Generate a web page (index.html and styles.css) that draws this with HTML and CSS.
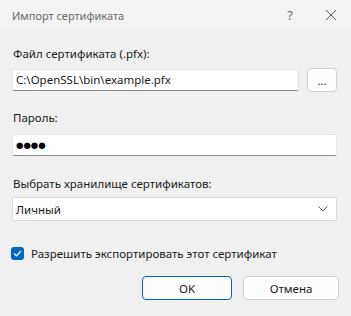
FILE: index.html
```html
<!DOCTYPE html>
<html lang="ru">
<head>
    <meta charset="UTF-8">
    <title>Импорт сертификата</title>
    <link rel="stylesheet" href="styles.css">
</head>
<body>
    <div class="dialog">
        <div class="titlebar">
            <span class="title">Импорт сертификата</span>
            <span class="help">?</span>
            <span class="close">
                <svg width="12" height="12" viewBox="0 0 12 12"><path d="M1 1 L11 11 M11 1 L1 11" stroke="#5a5a5a" stroke-width="1"/></svg>
            </span>
        </div>

        <div class="content">
            <label class="label">Файл сертификата (.pfx):</label>
            <div class="file-row">
                <div class="textbox file-box">C:\OpenSSL\bin\example.pfx</div>
                <button class="btn browse">...</button>
            </div>

            <label class="label pass-label">Пароль:</label>
            <div class="textbox pass-box">●●●●</div>

            <label class="label store-label">Выбрать хранилище сертификатов:</label>
            <div class="combo">
                <span>Личный</span>
                <svg width="10" height="6" viewBox="0 0 10 6"><path d="M0.5 0.5 L5 5 L9.5 0.5" fill="none" stroke="#666" stroke-width="1"/></svg>
            </div>

            <div class="check-row">
                <span class="checkbox">
                    <svg width="9" height="7" viewBox="0 0 9 7"><path d="M1 3.5 L3.5 6 L8 1" fill="none" stroke="#fff" stroke-width="1.2"/></svg>
                </span>
                <span>Разрешить экспортировать этот сертификат</span>
            </div>

            <div class="actions">
                <button class="btn ok">OK</button>
                <button class="btn cancel">Отмена</button>
            </div>
        </div>
    </div>
</body>
</html>
```

FILE: styles.css
```css
html, body {
    margin: 0;
    padding: 0;
}
body {
    font-family: "Noto Sans", "Open Sans", sans-serif;
    font-size: 11.5px;
    color: #1a1a1a;
    background-color: #f0f0f0;
    width: 351px;
    height: 316px;
    overflow: hidden;
}
.titlebar {
    height: 30px;
    display: flex;
    align-items: center;
    background-color: #f3f3f3;
    color: #6b6b6b;
}
.title {
    margin-left: 12px;
    flex: 1;
    font-size: 11px;
}
.help {
    width: 20px;
    text-align: center;
    margin-right: 25px;
    font-size: 13px;
}
.close {
    display: flex;
    margin-right: 14px;
}
.content {
    padding: 15px 14px 0 12px;
    display: flex;
    flex-direction: column;
}
.label {
    display: block;
    margin-left: 1px;
    line-height: 18px;
}
.file-row {
    display: flex;
    gap: 8px;
    margin-top: 6px;
}
.textbox {
    background: #fff;
    border: 1px solid #e6e6e6;
    border-bottom-color: #8a8a8a;
    border-radius: 2px;
    height: 20px;
    line-height: 20px;
    padding: 0 3px;
    box-sizing: content-box;
}
.file-box {
    flex: 1;
}
.btn {
    font-family: inherit;
    font-size: 11.5px;
    color: #1a1a1a;
    background: #fdfdfd;
    border: 1px solid #d0d0d0;
    border-radius: 4px;
    padding: 0;
    height: 24px;
}
.browse {
    width: 30px;
    margin-top: -1px;
    font-size: 11px;
}
.pass-label {
    margin-top: 17px;
}
.pass-box {
    margin-top: 7px;
    font-family: "DejaVu Sans", sans-serif;
    font-size: 8.5px;
    letter-spacing: 0;
    color: #000;
}
.store-label {
    margin-top: 19px;
}
.combo {
    margin-top: 4px;
    height: 22px;
    background: #fff;
    border: 1px solid #d9d9d9;
    border-radius: 2px;
    display: flex;
    align-items: center;
    justify-content: space-between;
    padding: 0 8px 0 3px;
}
.check-row {
    display: flex;
    align-items: center;
    gap: 7px;
    margin-top: 25px;
    margin-left: -1px;
}
.checkbox {
    width: 13px;
    height: 13px;
    border-radius: 3px;
    background: #0067c0;
    display: flex;
    align-items: center;
    justify-content: center;
}
.actions {
    display: flex;
    justify-content: flex-end;
    gap: 11px;
    margin-top: 15px;
    margin-right: -2px;
}
.ok {
    width: 90px;
    border-color: #0067c0;
}
.cancel {
    width: 96px;
}
```
